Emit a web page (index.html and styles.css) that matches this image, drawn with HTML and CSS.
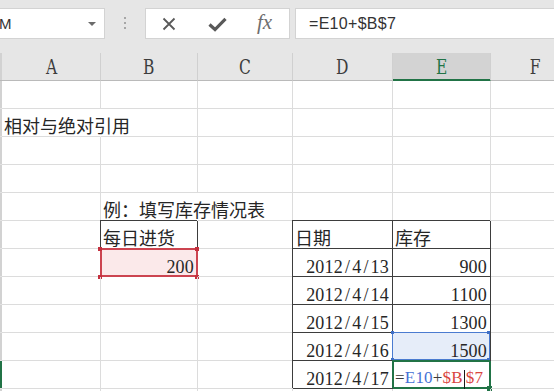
FILE: index.html
```html
<!DOCTYPE html>
<html>
<head>
<meta charset="utf-8">
<link rel="stylesheet" href="styles.css">
</head>
<body>
<div class="app">
  <div class="toolbar">
    <div class="namebox"><span class="name">M</span><span class="caret"></span></div>
    <div class="grip"><i></i><i></i><i></i></div>
    <div class="fbtns">
      <svg class="ic-x" width="14" height="14" viewBox="0 0 14 14"><path d="M1.5 1.5 L12.5 12.5 M12.5 1.5 L1.5 12.5" stroke="#595959" stroke-width="1.8" fill="none"/></svg>
      <svg class="ic-ok" width="19" height="15" viewBox="0 0 19 15"><path d="M1.5 7.5 L7 12.5 L17.5 1.8" stroke="#595959" stroke-width="3.2" fill="none"/></svg>
      <span class="fx">fx</span>
    </div>
    <div class="finput">=E10+$B$7</div>
  </div>

  <div class="sheet">
    <div class="s hs"></div><div class="h"><span>A</span></div><div class="h"><span>B</span></div><div class="h"><span>C</span></div><div class="h"><span>D</span></div><div class="h h-on"><span>E</span></div><div class="h"><span>F</span></div>

    <div class="s"></div><div class="c"></div><div class="c"></div><div class="c"></div><div class="c"></div><div class="c"></div><div class="c"></div>

    <div class="s"></div><div class="c ov"><span>相对与绝对引用</span></div><div class="c"></div><div class="c"></div><div class="c"></div><div class="c"></div><div class="c"></div>

    <div class="s"></div><div class="c"></div><div class="c"></div><div class="c"></div><div class="c"></div><div class="c"></div><div class="c"></div>

    <div class="s"></div><div class="c"></div><div class="c"></div><div class="c"></div><div class="c"></div><div class="c"></div><div class="c"></div>

    <div class="s"></div><div class="c"></div><div class="c ov"><span>例：填写库存情况表</span></div><div class="c"></div><div class="c"></div><div class="c"></div><div class="c"></div>

    <div class="s"></div><div class="c"></div><div class="c t">每日进货</div><div class="c"></div><div class="c t">日期</div><div class="c t">库存</div><div class="c"></div>

    <div class="s"></div><div class="c"></div><div class="c n sel-r">200</div><div class="c"></div><div class="c t n">2012<span class="sl">/</span>4<span class="sl">/</span>13</div><div class="c t n">900</div><div class="c"></div>

    <div class="s"></div><div class="c"></div><div class="c"></div><div class="c"></div><div class="c t n">2012<span class="sl">/</span>4<span class="sl">/</span>14</div><div class="c t n">1100</div><div class="c"></div>

    <div class="s"></div><div class="c"></div><div class="c"></div><div class="c"></div><div class="c t n">2012<span class="sl">/</span>4<span class="sl">/</span>15</div><div class="c t n">1300</div><div class="c"></div>

    <div class="s"></div><div class="c"></div><div class="c"></div><div class="c"></div><div class="c t n">2012<span class="sl">/</span>4<span class="sl">/</span>16</div><div class="c t n sel-b">1500</div><div class="c"></div>

    <div class="s s-on"></div><div class="c"></div><div class="c"></div><div class="c"></div><div class="c t n">2012<span class="sl">/</span>4<span class="sl">/</span>17</div><div class="c t n f sel-g"><span class="op">=</span><span class="ref-b">E10</span><span class="op">+</span><span class="ref-r">$B</span><span class="cur"></span><span class="ref-r">$7</span></div><div class="c"></div>

    <div class="s"></div><div class="c"></div><div class="c"></div><div class="c"></div><div class="c"></div><div class="c"></div><div class="c"></div>
  </div>
</div>
</body>
</html>
```

FILE: styles.css
```css
html, body {
  margin: 0;
  padding: 0;
  background: #ffffff;
}
body {
  width: 554px;
  height: 391px;
  overflow: hidden;
}
.app {
  height: 391px;
  overflow: hidden;
  font-family: "Noto Sans CJK SC", "Noto Sans", sans-serif;
  color: #262626;
}

/* ---------- toolbar ---------- */
.toolbar {
  height: 53px;
  box-sizing: border-box;
  padding-top: 8px;
  background: #e6e6e6;
  display: flex;
  align-items: flex-start;
}
.namebox {
  width: 105px;
  height: 31px;
  box-sizing: border-box;
  background: #fff;
  border: 1px solid #d3d3d3;
  border-left: none;
  display: flex;
  align-items: center;
  justify-content: space-between;
  padding-right: 8px;
}
.name {
  font: 15px "Liberation Sans", sans-serif;
  color: #333;
  margin-left: -1px;
}
.caret {
  width: 0;
  height: 0;
  border-left: 4px solid transparent;
  border-right: 4px solid transparent;
  border-top: 4px solid #6b6b6b;
}
.grip {
  width: 40px;
  box-sizing: border-box;
  padding-top: 9px;
  display: flex;
  flex-direction: column;
  align-items: center;
  gap: 3px;
}
.grip i {
  display: block;
  width: 2px;
  height: 2px;
  background: #a6a6a6;
}
.fbtns {
  width: 145px;
  height: 31px;
  box-sizing: border-box;
  background: #fff;
  border: 1px solid #d3d3d3;
  display: flex;
  align-items: center;
  padding-left: 16px;
}
.ic-x { margin-right: 32px; }
.ic-ok { margin-right: 30px; margin-top: 1px; }
.fx {
  font: italic 21px "Liberation Serif", serif;
  color: #6e6e6e;
  margin-top: -2px;
}
.finput {
  flex: 1;
  margin-left: 5px;
  height: 31px;
  box-sizing: border-box;
  background: #fff;
  border: 1px solid #d3d3d3;
  border-right: none;
  padding-left: 13px;
  display: flex;
  align-items: center;
  font: 16px "Liberation Sans", sans-serif;
  letter-spacing: 0.3px;
  color: #333;
}

/* ---------- sheet ---------- */
.sheet {
  display: grid;
  grid-template-columns: 2px 99px 97px 95px 100px 98px 90px;
  grid-auto-rows: 28px;
  width: 554px;
  height: 338px;
  overflow: hidden;
}
.s {
  background: #d2d2d2;
  border-bottom: 1px solid #e2e2e2;
}
.s.hs { background: #d2d2d2; border-bottom-color: #b9b9b9; }
.s.s-on { background: #217346; }

.h {
  background: #e6e6e6;
  border-right: 1px solid #d0d0d0;
  border-bottom: 1px solid #bababa;
  display: flex;
  align-items: center;
  justify-content: center;
  font: 20px "DejaVu Serif Condensed", "DejaVu Serif", "Liberation Serif", serif;
  font-stretch: condensed;
  color: #3c3c3c;
  padding-top: 1px;
}
.h span {
  display: inline-block;
  transform: scaleX(0.86);
}
.h.h-on {
  background: #d3d3d3;
  color: #217346;
  border-bottom-color: #217346;
  box-shadow: inset 0 -1px 0 #217346;
}

.c {
  position: relative;
  box-sizing: border-box;
  border-right: 1px solid #dcdcdc;
  border-bottom: 1px solid #dcdcdc;
  display: flex;
  align-items: flex-end;
  padding: 0 3px 0 2px;
  font-size: 18px;
  line-height: 22px;
  white-space: nowrap;
  min-width: 0;
}
.c.ov { border-right-color: transparent; }

.c.t {
  border-right-color: #3d3d3d;
  border-bottom-color: #3d3d3d;
  box-shadow: -1px -1px 0 #3d3d3d;
}
.c.n {
  justify-content: flex-end;
  font-family: "Liberation Serif", serif;
  line-height: 18px;
  letter-spacing: 0.2px;
}
.sl { margin: 0 2px; }

/* selections */
.c.sel-r {
  background: #fbe9ea;
  border-right-color: #cc4450;
  border-bottom-color: #cc4450;
  box-shadow: -1px -1px 0 #cc4450, inset 1px 1px 0 #cc4450, inset -1px -1px 0 #cc4450;
}
.c.sel-r::after {
  content: "";
  position: absolute;
  left: -3px;
  top: -2px;
  width: 4px;
  height: 4px;
  background: #c4303e;
  box-shadow: 97px 0 0 #c4303e, 0 28px 0 #c4303e, 97px 28px 0 #c4303e;
}

.c.sel-b {
  background: #e6edf9;
  box-shadow: -1px -1px 0 #4a7bd0, inset -1px -1px 0 #4a7bd0;
}
.c.sel-b::after {
  content: "";
  position: absolute;
  left: -2px;
  top: -2px;
  width: 3px;
  height: 3px;
  background: #3f6fc6;
  box-shadow: 96px 0 0 #3f6fc6, 0 27px 0 #3f6fc6, 96px 27px 0 #3f6fc6;
}

.c.sel-g {
  border-right-color: #217346;
  border-bottom-color: #217346;
  box-shadow: -1px -1px 0 #217346, inset 1px 1px 0 #217346, inset -1px -1px 0 #217346;
}
.c.sel-g::after {
  content: "";
  position: absolute;
  left: 94px;
  top: 25px;
  width: 5px;
  height: 5px;
  background: #217346;
}
.c.f {
  justify-content: flex-start;
  font-size: 17px;
  line-height: 18px;
  padding-left: 2px;
  padding-bottom: 1px;
  letter-spacing: 0.2px;
}
.op { color: #3a3a3a; }
.ref-b { color: #4472d6; }
.ref-r { color: #d9463f; }
.cur {
  display: inline-block;
  width: 1px;
  height: 19px;
  background: #1a1a1a;
  margin: 0 1px -2px 1px;
  align-self: flex-end;
}
```
